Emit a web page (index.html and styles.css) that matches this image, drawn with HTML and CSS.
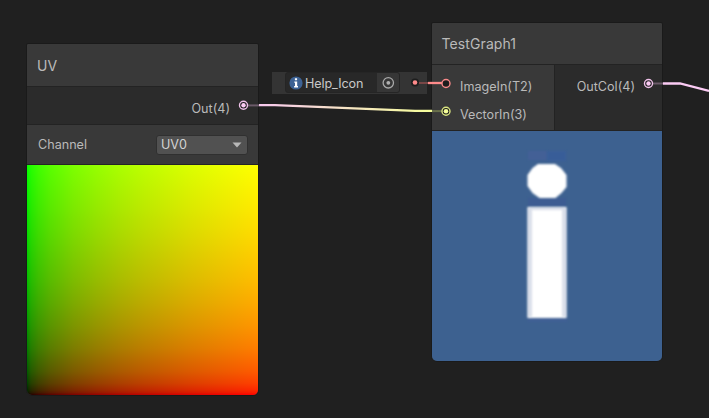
FILE: index.html
```html
<!DOCTYPE html>
<html lang="en">
<head>
<meta charset="utf-8">
<title>Shader Graph</title>
<link rel="stylesheet" href="styles.css">
</head>
<body>
<main class="canvas">
  <section class="node node-uv">
    <header class="title">UV</header>
    <div class="ports">
      <div class="outputs"><div class="port"><span>Out(4)</span></div></div>
    </div>
    <div class="controls">
      <span class="label">Channel</span>
      <div class="dropdown"><span>UV0</span>
        <svg width="10" height="6" viewBox="0 0 10 6"><path d="M.5 .5h9L5 5.500z" fill="#b8b8b8"/></svg>
      </div>
    </div>
    <div class="preview preview-uv"></div>
  </section>

  <section class="node node-graph">
    <header class="title">TestGraph1</header>
    <div class="ports ports-split">
      <div class="inputs">
        <div class="port"><span>ImageIn(T2)</span></div>
        <div class="port"><span>VectorIn(3)</span></div>
      </div>
      <div class="outputs"><div class="port"><span>OutCol(4)</span></div></div>
    </div>
    <div class="preview preview-image">
      <svg width="230" height="230" viewBox="0 0 230 230">
        <defs><filter id="soft" x="-20%" y="-20%" width="140%" height="140%"><feGaussianBlur stdDeviation="1.2"/></filter></defs>
        <path d="M96 20h19v9H96z" fill="#46619b" opacity=".6" filter="url(#soft)"/>
        <path d="M115 20h19v10h-19z" fill="#385d9b" opacity=".8" filter="url(#soft)"/>
        <path d="M96 67h38v8H96z" fill="#3e5a94" opacity=".7" filter="url(#soft)"/>
        <path d="M96 186h39v5H96z" fill="#435f99" opacity=".6" filter="url(#soft)"/>
        <g fill="#fff" filter="url(#soft)">
          <path d="M106 33h17l6 4 5.500 7v12l-5 6-6 5h-16l-7-5-5-7V44l5-7z"/>
          <path d="M95.500 76h39v111h-39z"/>
        </g>
        <path d="M96 77h4v109h-4zM130 77h4v109h-4zM97 76h36v3H97z" fill="#9eabc8" opacity=".38" filter="url(#soft)"/>
      </svg>
    </div>
  </section>

  <div class="slot">
    <div class="object-field">
      <svg class="info" width="14" height="14" viewBox="0 0 14 14"><circle cx="7" cy="7" r="6.600" fill="#3d6294"/><path d="M5.900 2.300h2.200v2H5.900zM5.300 5.500h2.900v4.600h.8v1.300H5.100v-1.300H6V6.800h-.7z" fill="#fff"/></svg>
      <span class="name">Help_Icon</span>
      <span class="picker"><svg width="14" height="14" viewBox="0 0 14 14"><circle cx="7.300" cy="6.800" r="5.200" fill="none" stroke="#a8a8a8" stroke-width="1.300"/><circle cx="7.300" cy="6.800" r="1.900" fill="#b0b0b0"/></svg></span>
    </div>
  </div>

  <svg class="wires" width="709" height="418" viewBox="0 0 709 418">
    <defs>
      <linearGradient id="edge" gradientUnits="userSpaceOnUse" x1="258" y1="0" x2="432" y2="0">
        <stop offset="0" stop-color="#f7c8ef"/><stop offset="1" stop-color="#f6ff9a"/>
      </linearGradient>
    </defs>
    <g fill="none" stroke-width="2.300">
      <path d="M247 105.400h12" stroke="#6b5a69" stroke-width="2"/>
      <path d="M259 105.200h16L415 110.900h17" stroke="url(#edge)"/>
      <path d="M432 111.100h10" stroke="#69704b" stroke-width="2"/>
      <path d="M418 83h10" stroke="#784646" stroke-width="2"/>
      <path d="M428 83h14" stroke="#ff8b8b"/>
      <path d="M652 83.500h11" stroke="#6b5a69" stroke-width="2"/>
      <path d="M663 83.500h17L709 91" stroke="#fbcbf4"/>
    </g>
    <g fill="#1d1d1d" stroke-width="1.400">
      <circle cx="243.500" cy="105.300" r="4" stroke="#f0c2ea"/>
      <circle cx="648.500" cy="83.500" r="4" stroke="#f0c2ea"/>
      <circle cx="446" cy="83.500" r="4" stroke="#f98a8a"/>
      <circle cx="446" cy="111.200" r="4" stroke="#dbe681"/>
      <circle cx="415" cy="82.500" r="4" stroke="none"/>
    </g>
    <circle cx="243.500" cy="105.300" r="2.200" fill="#fbcbf4"/>
    <circle cx="648.500" cy="83.500" r="2.200" fill="#fbcbf4"/>
    <circle cx="446" cy="111.200" r="2.300" fill="#f6ff9a"/>
    <circle cx="415" cy="82.500" r="2.300" fill="#ff8b8b"/>
  </svg>
</main>
</body>
</html>
```

FILE: styles.css
```css
* { box-sizing: border-box; }
body { margin: 0; background: #202020; color: #bababa; font: 12.6px/18px Inter, sans-serif; }
.canvas { position: relative; width: 709px; height: 418px; overflow: hidden; }
.node { position: absolute; border: 1px solid #1a1a1a; border-radius: 2px 2px 6px 6px; background: #393939; overflow: hidden; }
.node-uv { left: 26px; top: 43px; width: 233px; height: 353px; }
.node-graph { left: 431px; top: 22px; width: 232px; height: 340px; }
.title { height: 43px; padding: 13px 10px 0; border-bottom: 1px solid #232323; font-size: 14px; letter-spacing: .1px; }
.node-graph .title { height: 42px; padding: 12px 9.5px 0; }
.ports { height: 38px; background: #2b2b2b; border-bottom: 1px solid #232323; }
.outputs { background: #2b2b2b; padding: 13px 28px 0 0; text-align: right; }
.controls { height: 40px; display: flex; align-items: center; justify-content: space-between; padding: 0 10px 0 11px; border-bottom: 1px solid #242424; }
.dropdown { width: 92px; height: 20px; display: flex; align-items: center; justify-content: space-between; padding: 0 5px 0 4px; background: #515151; border: 1px solid #303030; border-radius: 3px; color: #d4d4d4; }
.preview { width: 100%; height: 230px; }
.preview-uv {
  background:
    linear-gradient(to right, #000, #190000 1%, #270000 2%, #3f0000 5%, #590000 10%, #7c0000 20%, #950000 30%, #aa0000 40%, #bc0000 50%, #cb0000 60%, #da0000 70%, #e70000 80%, #f30000 90%, #f00),
    linear-gradient(to top, #000, #001900 1%, #002700 2%, #003f00 5%, #005900 10%, #007c00 20%, #009500 30%, #00aa00 40%, #00bc00 50%, #00cb00 60%, #00da00 70%, #00e700 80%, #00f300 90%, #0f0);
  background-blend-mode: screen;
}
.ports-split { display: grid; grid-template-columns: 123px 1fr; height: 66px; }
.inputs { background: #393939; border-right: 1px solid #232323; padding: 13px 0 0 28px; }
.inputs .port { height: 27.5px; }
.inputs .port:last-child { height: 18px; }
.ports-split .outputs { padding: 13px 27px 0 0; }
.preview-image { background: #3d6190; }
.preview svg { display: block; }
.slot { position: absolute; left: 272px; top: 72px; width: 155px; height: 22px; padding: 0 0 0 13px; background: #343434; }
.object-field { width: 115px; height: 21px; display: flex; align-items: center; background: #282828; border: 1px solid #252525; border-radius: 3px; padding-left: 3px; overflow: hidden; color: #c8c8c8; }
.name { margin-left: 2px; flex: 1; padding-top: 2px; letter-spacing: -.1px; }
.picker { width: 22px; height: 19px; display: flex; align-items: center; justify-content: center; background: #363636; }
.wires { position: absolute; left: 0; top: 0; }
```
